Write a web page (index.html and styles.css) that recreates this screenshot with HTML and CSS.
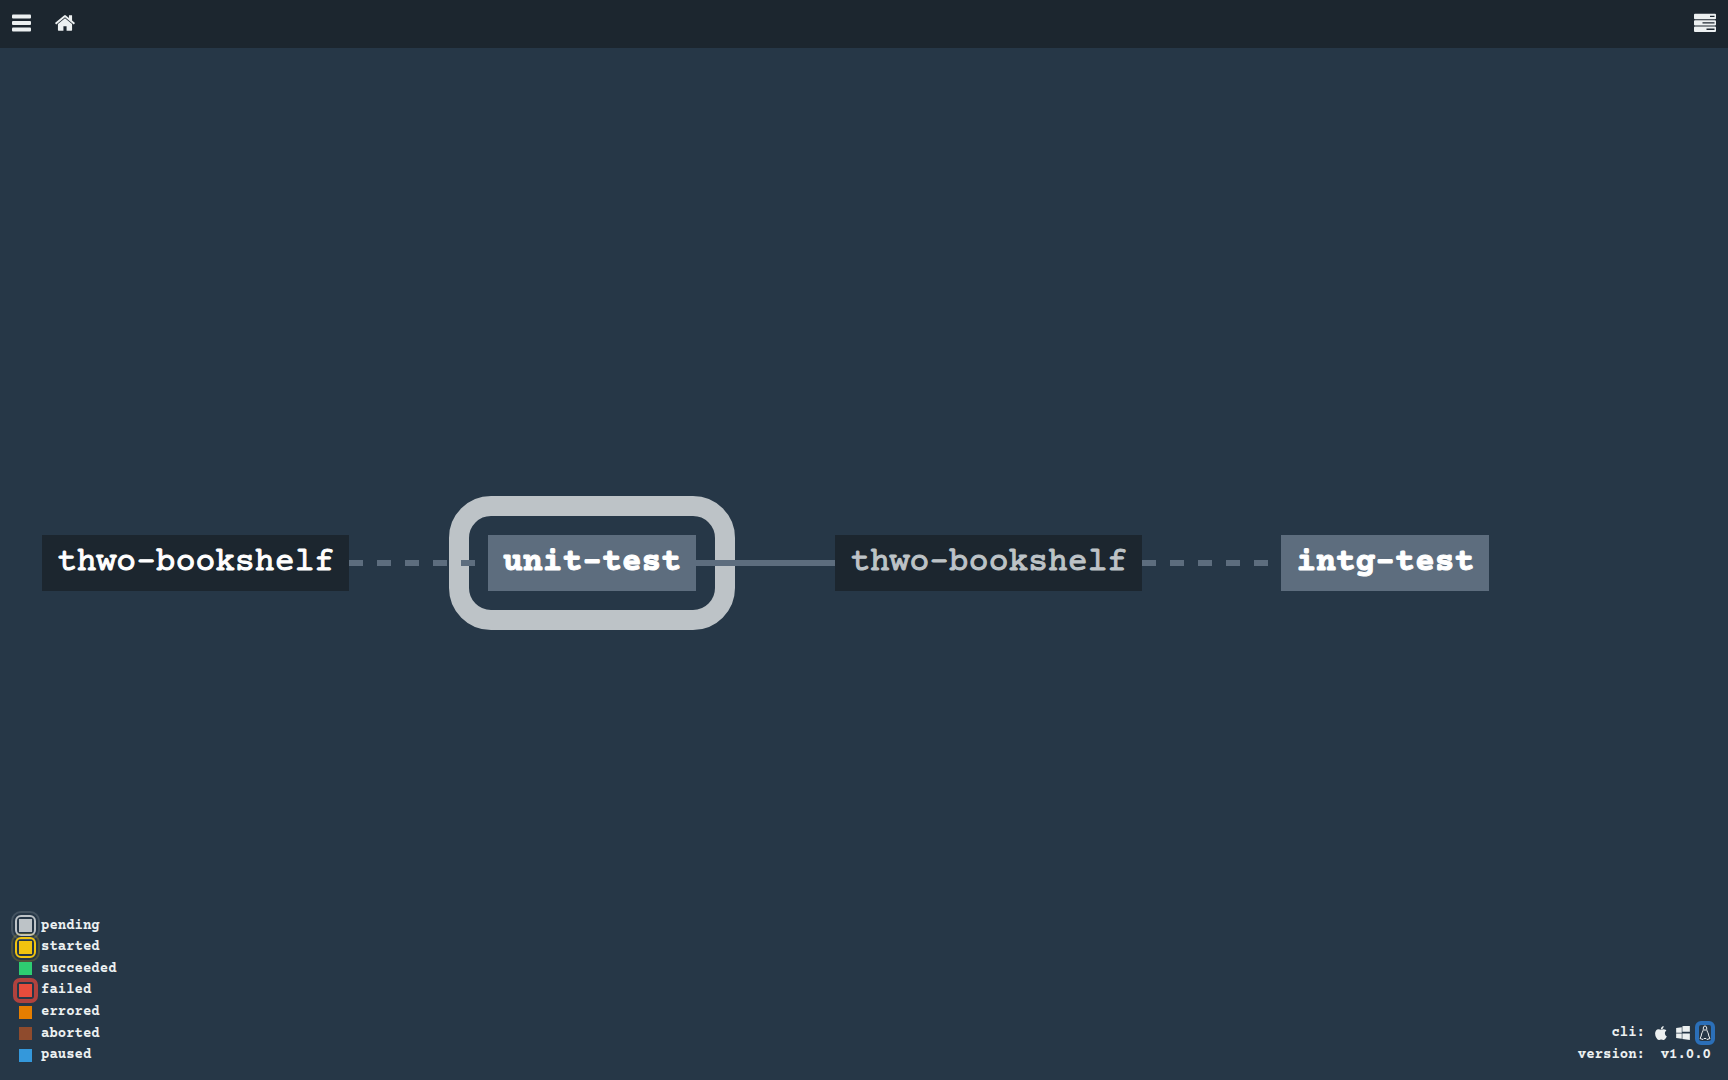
FILE: index.html
```html
<!DOCTYPE html>
<html lang="en">
<head>
<meta charset="utf-8">
<title>Pipeline</title>
<link rel="stylesheet" href="styles.css">
</head>
<body>
<header class="topbar">
  <nav class="topbar-nav">
    <button class="icon-button" type="button" aria-label="Toggle pipelines">
      <svg width="19" height="18" viewBox="0 0 19 18"><rect y="0.500" width="19" height="4" rx="1"/><rect y="7" width="19" height="4" rx="1"/><rect y="13.500" width="19" height="4" rx="1"/></svg>
    </button>
    <a class="icon-button" href="#" aria-label="Home">
      <svg width="22" height="22" viewBox="0 0 1792 1792"><path d="M1472 992v480q0 26-19 45t-45 19h-384v-384h-256v384h-384q-26 0-45-19t-19-45v-480q0-1 .5-3t.5-3l575-474 575 474q1 2 1 6zm223-69l-62 74q-8 9-21 11h-3q-13 0-21-7l-692-577-692 577q-12 8-24 7-13-2-21-11l-62-74q-8-10-7-23.500t11-21.500l719-599q32-26 76-26t76 26l244 204v-195q0-14 9-23t23-9h192q14 0 23 9t9 23v408l219 182q10 8 11 21.500t-7 23.500z"/></svg>
    </a>
  </nav>
  <a class="icon-button" href="#" aria-label="Builds">
    <svg width="22" height="20" viewBox="0 0 22 20"><path fill-rule="evenodd" d="M1 .8h20q1 0 1 1v3.400q0 1-1 1H1q-1 0-1-1V1.800q0-1 1-1zM16 2.700v1.400h4.500V2.700zM1 7.200h20q1 0 1 1v3.400q0 1-1 1H1q-1 0-1-1V8.200q0-1 1-1zM8.500 9.200v1.300h12V9.200zM1 13.600h20q1 0 1 1V18q0 1-1 1H1q-1 0-1-1v-3.400q0-1 1-1zM12.500 15.400v1.700h8v-1.700z"/></svg>
  </a>
</header>
<main class="stage">
  <div class="pipeline">
    <a class="node resource" href="#">thwo-bookshelf</a>
    <span class="edge dashed"></span>
    <a class="node job pending" href="#">unit-test</a>
    <span class="edge"></span>
    <a class="node resource constrained" href="#">thwo-bookshelf</a>
    <span class="edge dashed"></span>
    <a class="node job" href="#">intg-test</a>
  </div>
  <footer class="footer">
    <ul class="legend">
      <li><span class="swatch is-pending"></span>pending</li>
      <li><span class="swatch is-started"></span>started</li>
      <li><span class="swatch is-succeeded"></span>succeeded</li>
      <li><span class="swatch is-failed"></span>failed</li>
      <li><span class="swatch is-errored"></span>errored</li>
      <li><span class="swatch is-aborted"></span>aborted</li>
      <li><span class="swatch is-paused"></span>paused</li>
    </ul>
    <dl class="info">
      <dt>cli:</dt>
      <dd class="downloads">
        <a class="download" href="#" aria-label="macOS cli"><svg width="12" height="14" viewBox="190 0 1410 1664"><path d="M1585 1215q-39 125-123 250-129 196-257 196-49 0-140-32-86-32-151-32-61 0-142 33-81 34-132 34-152 0-301-259-147-261-147-503 0-228 113-374 113-144 284-144 72 0 177 30 104 30 138 30 45 0 143-34 102-34 173-34 119 0 213 65 52 36 104 100-79 67-114 118-65 94-65 207 0 124 69 223t158 126zm-376-1173q0 61-29 136-30 75-93 138-54 54-108 72-37 11-104 17 3-149 78-257 74-107 250-148 1 3 2.500 11t2.500 11q0 4 .5 10t.5 10z"/></svg></a>
        <a class="download" href="#" aria-label="Windows cli"><svg width="14" height="14" viewBox="64 100 1664 1700"><path d="M746 1006v651l-682-94v-557h682zm0-743v659h-682v-565zm982 743v786l-907-125v-661h907zm0-1006v794h-907v-669z"/></svg></a>
        <a class="download focused" href="#" aria-label="Linux cli"><svg width="12" height="16" viewBox="0 0 12 16"><path fill="none" stroke="#ecf0f1" d="M6 1C4.500 1 4.200 2.300 4.300 4.500 4.200 6.500 2.300 8 2.200 11L1 13.500 4 14.500 5 13.500h2L8 14.500 11 13.500 9.800 11C9.700 8 7.800 6.500 7.700 4.500 7.800 2.300 7.500 1 6 1z"/><path d="M4.500 4.500h3L6 6z"/></svg></a>
      </dd>
      <dt>version:</dt>
      <dd>v1.0.0</dd>
    </dl>
  </footer>
</main>
</body>
</html>
```
FILE: styles.css
```css
* {
  box-sizing: border-box;
}

body {
  margin: 0;
  min-height: 100vh;
  display: flex;
  flex-direction: column;
  background: #263747;
  color: #ecf0f1;
  font-family: "Courier Prime", "Courier New", "Liberation Mono", monospace;
}

a {
  color: inherit;
  text-decoration: none;
}

svg {
  display: block;
  fill: #ecf0f1;
}

.topbar {
  display: flex;
  justify-content: space-between;
  align-items: center;
  height: 48px;
  padding: 0 12px 2px;
  background: #1c262f;
}

.topbar-nav {
  display: flex;
  align-items: center;
  gap: 23px;
}

.icon-button {
  padding: 0;
  border: 0;
  background: none;
}

.stage {
  flex: 1;
  display: grid;
}

.pipeline {
  grid-area: 1 / 1;
  display: flex;
  align-items: center;
  padding: 0 42px 2px;
}

.node {
  position: relative;
  padding: 9px 15px;
  font-size: 33px;
  line-height: 38px;
  white-space: nowrap;
  color: #fff;
  -webkit-text-stroke: 1px currentColor;
}

.resource {
  background: #1c262f;
}

.constrained {
  color: #bdc3c7;
}

.job {
  background: #5d6d7e;
  font-weight: 700;
}

/* Ring around a job with a pending build; the edges run over it. */
.pending::before {
  content: "";
  position: absolute;
  inset: -39px;
  border: 20px solid #bdc3c7;
  border-radius: 42px;
}

.edge {
  position: relative;
  z-index: 1;
  flex: none;
  width: 139px;
  height: 6px;
  background: #5d6d7e;
}

.dashed {
  background: repeating-linear-gradient(90deg, #5d6d7e 0 14px, transparent 14px 28px);
}

.footer {
  grid-area: 1 / 1;
  align-self: end;
  display: flex;
  justify-content: space-between;
  align-items: end;
  padding: 0 17px 14px 19px;
  font-size: 14px;
  line-height: 20px;
  font-weight: 700;
}

.legend {
  display: grid;
  grid-auto-rows: 1fr;
  height: 151px;
  margin: 0;
  padding: 0;
  list-style: none;
}

.legend li {
  display: flex;
  align-items: center;
  gap: 9px;
}

.swatch {
  position: relative;
  width: 13px;
  height: 13px;
}

.is-pending {
  background: #bdc3c7;
}

.is-started {
  background: #f1c40f;
}

.is-succeeded {
  background: #2ecc71;
}

.is-failed {
  background: #e74c3c;
}

.is-errored {
  background: #e67e00;
}

.is-aborted {
  background: #8f4b2d;
}

.is-paused {
  background: #3498db;
}

.is-pending::after,
.is-started::after,
.is-failed::after {
  content: "";
  position: absolute;
  inset: -4px;
  border: 2px solid #bdc3c7;
  border-radius: 6px;
}

.is-pending::before,
.is-started::before {
  content: "";
  position: absolute;
  inset: -8px;
  border: 2px solid #bdc3c7;
  border-radius: 10px;
  opacity: 0.2;
}

.is-started::after,
.is-started::before {
  border-color: #f1c40f;
}

.is-failed::after {
  inset: -6px;
  border: 4px solid #b0423e;
  border-radius: 7px;
}

.info {
  display: grid;
  grid-template-columns: auto auto;
  column-gap: 10px;
  row-gap: 2px;
  margin: 0;
  padding-bottom: 1px;
  text-align: right;
}

.info dd {
  margin: 0;
}

.downloads {
  display: flex;
  align-items: center;
  justify-content: flex-end;
  gap: 9px;
}

.download.focused {
  outline: 4px solid #2b6fb8;
  border-radius: 2px;
}
```
